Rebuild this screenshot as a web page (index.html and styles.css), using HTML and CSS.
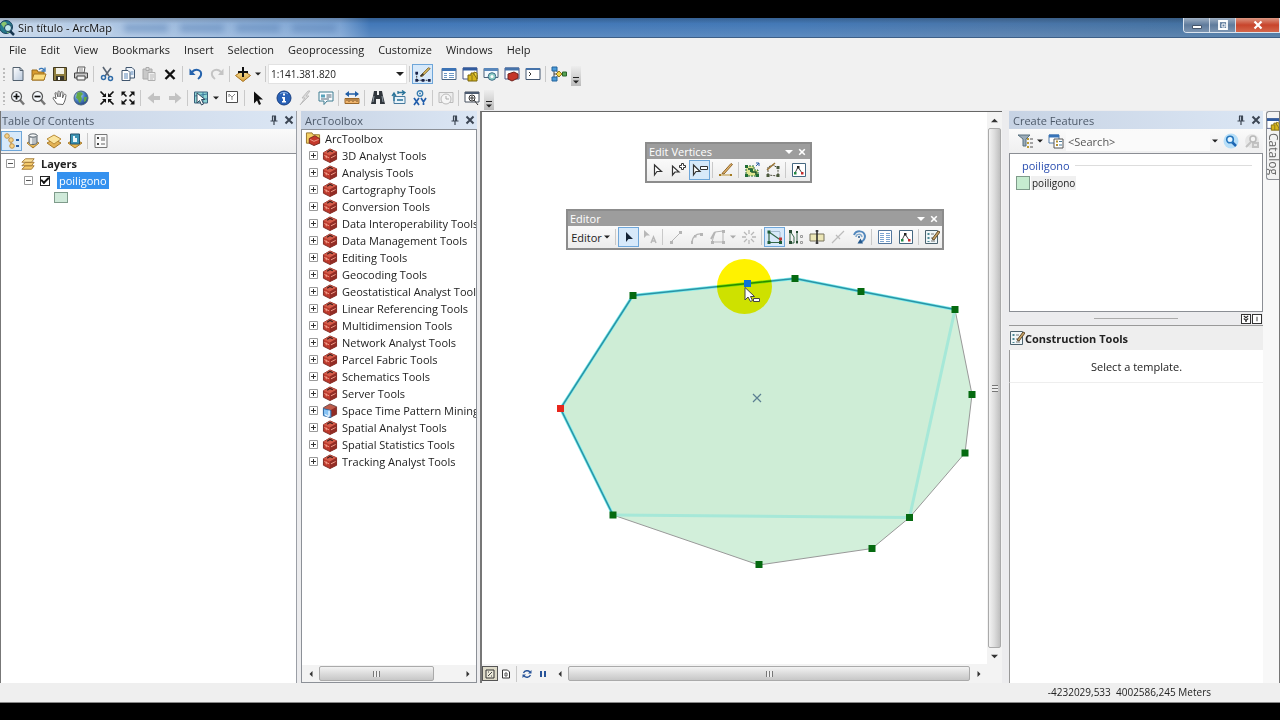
FILE: index.html
```html
<!DOCTYPE html>
<html lang="es">
<head>
<meta charset="utf-8">
<title>Sin título - ArcMap</title>
<link rel="stylesheet" href="styles.css">
</head>
<body>
<svg class="sprite" aria-hidden="true">
  <defs>
    <linearGradient id="steel" x1="0" y1="0" x2="1" y2="1"><stop offset="0" stop-color="#fff"/><stop offset="1" stop-color="#b8c8dc"/></linearGradient>
    <linearGradient id="gold" x1="0" y1="0" x2="0" y2="1"><stop offset="0" stop-color="#fbe6a0"/><stop offset="1" stop-color="#d9a23a"/></linearGradient>
    <radialGradient id="globe" cx=".35" cy=".3" r=".8"><stop offset="0" stop-color="#bfe0ff"/><stop offset=".5" stop-color="#4a7fc4"/><stop offset="1" stop-color="#1d3a78"/></radialGradient>
  </defs>
  <symbol id="pin" viewBox="0 0 10 10"><path d="M3 1h4M3.500 1v5M6.500 1v5M5.500 1v5M1.500 6h7M5 6v4" fill="none" stroke="#3c4654" stroke-width="1.200"/></symbol>
  <symbol id="close" viewBox="0 0 10 10"><path d="M1.500 1.500l7 7M8.500 1.500l-7 7" fill="none" stroke="currentColor" stroke-width="2"/></symbol>
  <symbol id="drop" viewBox="0 0 8 8"><path d="M0 2h8L4 6z" fill="currentColor"/></symbol>
  <symbol id="left" viewBox="0 0 8 8"><path d="M6 0v8L2 4z" fill="currentColor"/></symbol>
  <symbol id="right" viewBox="0 0 8 8"><path d="M2 0v8l4-4z" fill="currentColor"/></symbol>
  <symbol id="up" viewBox="0 0 8 8"><path d="M0 6h8L4 2z" fill="currentColor"/></symbol>
  <symbol id="new" viewBox="0 0 16 16"><path d="M3 1.500h7l3 3v10H3z" fill="url(#steel)" stroke="#52606e"/><path d="M10 1.500v3h3" fill="none" stroke="#52606e"/></symbol>
  <symbol id="open" viewBox="0 0 16 16"><path d="M1 14V4h5l1 2h6v8z" fill="#d99c2e" stroke="#94691c"/><path d="M1 14l2-6h12l-2 6z" fill="#fbdc7e" stroke="#a67722"/><path d="M8 3.500c2-2 4-1 5 .5M14 1.500v3.500h-3.500" fill="none" stroke="#3676b8" stroke-width="1.300"/></symbol>
  <symbol id="save" viewBox="0 0 16 16"><path d="M1.500 1.500h13v13h-13z" fill="#8f7e3e" stroke="#403820"/><path d="M4 2h8v6H4z" fill="#f3f1e6"/><path d="M4 10h8v4H4z" fill="#3a3930"/><path d="M6 11h2v3H6z" fill="#fff"/></symbol>
  <symbol id="print" viewBox="0 0 16 16"><path d="M4 7l1-6h7l-1 6z" fill="#fff" stroke="#555"/><path d="M1.500 7h13v5h-13z" fill="#c8c8c8" stroke="#444"/><path d="M4 10h8v4H4z" fill="#f4f4f4" stroke="#444"/><path d="M6 3h4M6 5h4" stroke="#8a8a8a"/></symbol>
  <symbol id="cut" viewBox="0 0 16 16"><path d="M4 1l6 9M12 2L6 10" fill="none" stroke="#5a6573" stroke-width="1.600"/><circle cx="4.500" cy="11.500" r="2" fill="none" stroke="#2e6ba8" stroke-width="1.500"/><circle cx="11.500" cy="12.500" r="2" fill="none" stroke="#2e6ba8" stroke-width="1.500"/></symbol>
  <symbol id="copy" viewBox="0 0 16 16"><path d="M6 1.500h6l2.500 2.500v8H6z" fill="#eef4fb" stroke="#40566e"/><path d="M2 4.500h6l2 2v8H2z" fill="#fff" stroke="#40566e"/><path d="M4 8h4M4 10h4M4 12h4M10.500 6h3M10.500 8h3" stroke="#5a87b8"/></symbol>
  <symbol id="paste" viewBox="0 0 16 16"><path d="M2 3h9v10H2z" fill="#c9c9c9" stroke="#aaa"/><path d="M5 1.500h3v3H5z" fill="#ddd" stroke="#aaa"/><path d="M7 6.500h7v8H7z" fill="#efefef" stroke="#b0b0b0"/><path d="M9 9h4M9 11h4M9 13h3" stroke="#bbb"/></symbol>
  <symbol id="delete" viewBox="0 0 16 16"><path d="M3.500 4l9 9M12.500 4l-9 9" stroke="#111" stroke-width="2.400"/></symbol>
  <symbol id="undo" viewBox="0 0 16 16"><path d="M4 6c4-4 10-2 9 3-.4 2-2 3-3 4" fill="none" stroke="#2462ac" stroke-width="2"/><path d="M1.500 2.500v6.500h6z" fill="#2462ac"/></symbol>
  <symbol id="redo" viewBox="0 0 16 16"><path d="M12 6C8 2 2 4 3 9c.4 2 2 3 3 4" fill="none" stroke="#c4c4c4" stroke-width="2"/><path d="M14.500 2.500v6.500H9z" fill="#c4c4c4"/></symbol>
  <symbol id="adddata" viewBox="0 0 16 16"><path d="M8 4.500l7.500 5L8 15.500l-7.500-6z" fill="url(#gold)" stroke="#a8711d"/><path d="M8 1v10M3 6h10" stroke="#111" stroke-width="2"/></symbol>
  <symbol id="editbar" viewBox="0 0 20 20"><path d="M3 9v8h14" fill="none" stroke="#222" stroke-dasharray="2 1"/><path d="M1.500 7.500h3v3h-3zM1.500 15.500h3v3h-3zM8.500 15.500h3v3h-3zM15.500 15.500h3v3h-3z" fill="#17214a"/><path d="M7 12l9-9 2 1-9 9z" fill="#d8b95c" stroke="#7a6432"/><path d="M7 12l3-3 1 2-4 2z" fill="#333"/></symbol>
  <symbol id="toc" viewBox="0 0 16 16"><path d="M1 2.500h14v11H1z" fill="#fff" stroke="#4a6583"/><path d="M1 2h14v3H1z" fill="#3c73b5"/><path d="M3 7.500h3M3 9.500h3M3 11.500h3M8 7.500h5M8 9.500h5M8 11.500h5" stroke="#6e99c5"/></symbol>
  <symbol id="catalog" viewBox="0 0 16 16"><path d="M1 2h14v11H1z" fill="#fff" stroke="#4a5583"/><path d="M1 1.500h14v3H1z" fill="#315b9e"/><path d="M6 9h3V7h3v2h3v6H6z" fill="#d6b51c" stroke="#79650e"/><path d="M10 15V9M12 8V6l3 1v6z" fill="#f0d847" stroke="#8a7415"/></symbol>
  <symbol id="searchwin" viewBox="0 0 16 16"><path d="M1 2.500h14v9H1z" fill="#f4faff" stroke="#4c627a"/><path d="M1 2h14v3H1z" fill="#5987bb"/><circle cx="9" cy="10.500" r="3.800" fill="#8ecdc5" stroke="#406e88"/><circle cx="9" cy="10.500" r="1.500" fill="#fff"/></symbol>
  <symbol id="toolwin" viewBox="0 0 16 16"><path d="M1 2h14v11H1z" fill="#fff" stroke="#4a5583"/><path d="M1 1.500h14v3H1z" fill="#4673aa"/><path d="M4 8l6-2 4 2v4l-6 3-4-2z" fill="#c5362b" stroke="#71231e"/></symbol>
  <symbol id="python" viewBox="0 0 16 16"><path d="M1 2.500h14v11H1z" fill="#fff" stroke="#41546e"/><path d="M1 2h14v2H1z" fill="#4673aa"/><path d="M4 6l2 2-2 2" fill="none" stroke="#333"/></symbol>
  <symbol id="model" viewBox="0 0 16 16"><path d="M3 3v10M3 8h10M4 3l4 5-4 5" stroke="#444" fill="none"/><path d="M1 1h5v4H1zM1 11h5v4H1z" fill="#4b9bd8" stroke="#22629b"/><path d="M5 8l3-3 3 3-3 3z" fill="#f1d14c" stroke="#8d7820"/><path d="M11.500 6h4v4h-4z" fill="#57a355" stroke="#2b642b"/></symbol>
  <symbol id="zoomin" viewBox="0 0 16 16"><path d="M10 10l4 4.500" stroke="#777" stroke-width="2.500"/><circle cx="6.500" cy="6.500" r="5" fill="#f4f8fc" stroke="#555" stroke-width="1.200"/><path d="M6.500 3.500v6M3.500 6.500h6" stroke="#111" stroke-width="1.700"/></symbol>
  <symbol id="zoomout" viewBox="0 0 16 16"><path d="M10 10l4 4.500" stroke="#777" stroke-width="2.500"/><circle cx="6.500" cy="6.500" r="5" fill="#f4f8fc" stroke="#555" stroke-width="1.200"/><path d="M3.500 6.500h6" stroke="#111" stroke-width="1.700"/></symbol>
  <symbol id="pan" viewBox="0 0 16 16"><path d="M5 14C3 11 1 9 1 8s2-1 3 1L3 3c1-1 2 0 2 1l1 3V1.500c1-1 2 0 2 1V7l1-5c1-1 2 0 2 1l-.5 5L12 4.500c1-1 2 0 2 1-.5 3-1 6-3 9z" fill="#fff" stroke="#666"/></symbol>
  <symbol id="full" viewBox="0 0 16 16"><circle cx="8" cy="8" r="7" fill="url(#globe)" stroke="#4a6583"/><path d="M4 3c3-2 5-1 6 1L8 6l1 3-2 4c-2-1-1-4-4-5zM11 7l3 0-1 4-2 1z" fill="#63a846"/></symbol>
  <symbol id="fixin" viewBox="0 0 16 16"><path d="M1.500 1.500l4 4M14.500 1.500l-4 4M1.500 14.500l4-4M14.500 14.500l-4-4" stroke="#111" stroke-width="1.700"/><path d="M7 3v4H3zM9 3v4h4zM7 13V9H3zM9 13V9h4z" fill="#111"/></symbol>
  <symbol id="fixout" viewBox="0 0 16 16"><path d="M3 3l3.500 3.500M13 3L9.500 6.500M3 13l3.500-3.500M13 13L9.500 9.500" stroke="#111" stroke-width="1.600"/><path d="M1.500 6V1.500H6zM14.500 6V1.500H10zM1.500 10v4.500H6zM14.500 10v4.500H10z" fill="#111"/></symbol>
  <symbol id="back" viewBox="0 0 16 16"><path d="M1.500 8L8 2.500V6h6v4H8v3.500z" fill="#c2c2c2"/></symbol>
  <symbol id="forward" viewBox="0 0 16 16"><path d="M14.500 8L8 2.500V6H2v4h6v3.500z" fill="#c2c2c2"/></symbol>
  <symbol id="select" viewBox="0 0 16 16"><path d="M1.500 2h13v11h-13z" fill="#8ed5d3" stroke="#3a617c"/><path d="M10 2v11M2 6l12-2M10 9h4" stroke="#3a779c"/><path d="M4 3v10l2.500-2.500L8.500 15l2-1-2-4.500H12z" fill="#fff" stroke="#344b60"/></symbol>
  <symbol id="clear" viewBox="0 0 16 16"><path d="M2.500 1.500h11v11h-11z" fill="#fff" stroke="#4c4c4c"/><path d="M5 4l3 3 3-3M8 7v3M5 4v3" fill="none" stroke="#888"/></symbol>
  <symbol id="pointer" viewBox="0 0 16 16"><path d="M4 1.500v12l3-3 2 4.500 2-1-2-4.500h4z" fill="#111"/></symbol>
  <symbol id="info" viewBox="0 0 16 16"><circle cx="8" cy="8" r="7" fill="#2961b6" stroke="#173f82"/><path d="M4 4c2-2 6-2 8 0" stroke="#92b9ed" fill="none"/><path d="M7 3.500h2v2H7zM6 7h3v4h1v1.500H6V11h1V8.500H6z" fill="#fff"/></symbol>
  <symbol id="bolt" viewBox="0 0 16 16"><path d="M11 1L5 8h3l-5 7 9-9H9l4-5z" fill="#ddd" stroke="#bdbdbd"/></symbol>
  <symbol id="popup" viewBox="0 0 16 16"><path d="M1 2h14v9H9l-3 3.500V11H1z" fill="#f8fcff" stroke="#3f7c91"/><path d="M3 4.500h4v3H3z" fill="#59a3bb"/><path d="M8.500 5h5M8.500 7h5M3 9h8" stroke="#567"/></symbol>
  <symbol id="measure" viewBox="0 0 16 16"><path d="M1 8.500h14v5H1z" fill="#f0b56d" stroke="#99672b"/><path d="M3 9v2M5 9v3M7 9v2M9 9v3M11 9v2M13 9v3" stroke="#795124"/><path d="M2 4h12" stroke="#225fa7" stroke-width="1.500"/><path d="M1 4l4-3v6zM15 4l-4-3v6z" fill="#225fa7"/></symbol>
  <symbol id="find" viewBox="0 0 16 16"><path d="M4 1h3v4h2V1h3l1 5 2 8h-5V9H6v5H1l2-8z" fill="#30363c"/><path d="M4 6l-1 6M12 6l1 6" stroke="#8f9aa3"/></symbol>
  <symbol id="route" viewBox="0 0 16 16"><path d="M3 6.500h11v7H3z" fill="#e8f3fa" stroke="#477a9d"/><path d="M3 11V4M1 6l2-3 2 3M7 2.500h6M11 .5l3 2-3 2.500M7 1v3M6 10h6" fill="none" stroke="#287399" stroke-width="1.300"/></symbol>
  <symbol id="xy" viewBox="0 0 16 16"><circle cx="8" cy="3.500" r="2.700" fill="#fff" stroke="#397db0" stroke-width="1.400"/><circle cx="8" cy="3.500" r="1" fill="#397db0"/><path d="M2 8l5 7M7 8l-5 7M9 8l2.500 4L14 8M11.500 11v4" fill="none" stroke="#235fac" stroke-width="1.700"/></symbol>
  <symbol id="time" viewBox="0 0 16 16"><path d="M1 2.500h14v10H1z" fill="#eee" stroke="#bbb"/><circle cx="8" cy="9" r="5" fill="#f6f6f6" stroke="#bbb"/><path d="M8 6v3h3" fill="none" stroke="#aaa"/></symbol>
  <symbol id="viewer" viewBox="0 0 16 16"><path d="M1 2h14v10H1z" fill="#fff" stroke="#454f5d"/><path d="M1 2h14v2H1z" fill="#4c5b70"/><circle cx="8" cy="8" r="3" fill="#fff" stroke="#333"/><path d="M6 8h4M8 6v4M10 10l4 5" stroke="#333"/></symbol>
  <symbol id="bydraw" viewBox="0 0 16 16"><path d="M3 3l4 4v6h3" fill="none" stroke="#a97b36"/><circle cx="3" cy="3" r="2.300" fill="#f5d288" stroke="#c2954e"/><circle cx="7" cy="7" r="2.300" fill="#f5d288" stroke="#c2954e"/><circle cx="8" cy="13" r="2.300" fill="#f5d288" stroke="#c2954e"/><path d="M12 7h3M12 13h3" stroke="#285fa5" stroke-width="2"/></symbol>
  <symbol id="bysource" viewBox="0 0 16 16"><path d="M2 10l6-3 6 3-6 5z" fill="url(#gold)" stroke="#a87b2c"/><path d="M4 2v8c1 2 7 2 8 0V2z" fill="#b8bec4" stroke="#5d666e"/><ellipse cx="8" cy="2.500" rx="4" ry="1.700" fill="#f4f6f8" stroke="#5d666e"/><path d="M6 5v6" stroke="#fff" stroke-width="1.500"/></symbol>
  <symbol id="byvis" viewBox="0 0 16 16"><path d="M1 10l7-4 7 4-7 5z" fill="#e3b255" stroke="#a87b2c"/><path d="M1 6l7-4 7 4-7 5z" fill="#fae49e" stroke="#b98c38"/></symbol>
  <symbol id="bysel" viewBox="0 0 16 16"><path d="M1 10l7-4 7 4-7 5z" fill="#e9b64b" stroke="#a87b2c"/><path d="M3.500 1h9v10h-9z" fill="#3c94b4" stroke="#24536c"/><path d="M6 3h2v2h2v4H6z" fill="#e9f6fa"/></symbol>
  <symbol id="options" viewBox="0 0 16 16"><path d="M2 1.500h12v13H2z" fill="#fafafa" stroke="#777"/><path d="M4 4h2v2H4zM4 10h2v2H4z" fill="#444"/><path d="M8 5h4M8 7h4M8 11h4" stroke="#666"/></symbol>
  <symbol id="layers" viewBox="0 0 16 16"><path d="M1 14l4-4h10l-3 4H1z" fill="#f4ca6c" stroke="#9e712a"/><path d="M1 10l4-4h10l-3 4H1z" fill="#f4ca6c" stroke="#9e712a"/><path d="M1 6l4-4h10l-3 4H1z" fill="#fbe19a" stroke="#9e712a"/></symbol>
  <symbol id="box" viewBox="0 0 16 16"><path d="M1 5l7-4 7 3v8l-7 3.500L1 12z" fill="#bd392b" stroke="#7c2a22"/><path d="M1 5l7-4 7 3-7 4z" fill="#d45b49"/><path d="M8 8l7-4v8l-7 3.500z" fill="#912c25"/><path d="M5 4.500l3-2 3 1.500" fill="none" stroke="#38201d" stroke-width="1.300"/><path d="M2 8l5 2.500M9 10.500l5-2.500M4 8v3" stroke="#f5a28f"/></symbol>
  <symbol id="boxfolder" viewBox="0 0 16 16"><path d="M1 2h6l1 2h7v9H1z" fill="#f4cf64" stroke="#94712a"/><path d="M4 8l6-3 5 3v5l-6 2.500L4 13z" fill="#c5392c" stroke="#762920"/><path d="M5 9l4 2 5-2" fill="none" stroke="#f0a08d"/></symbol>
  <symbol id="boxpy" viewBox="0 0 16 16"><path d="M1 5l7-4 7 3v8l-7 3.500L1 12z" fill="#bd5b4b" stroke="#6c4a4a"/><path d="M8 8l7-4v8l-7 3.500z" fill="#912c25"/><path d="M1 6l8 2v7.500l-8-2z" fill="#86c2f3" stroke="#2c6aa8"/><path d="M7 8v5c0 2-3 1-4-1" fill="none" stroke="#e7f4ff" stroke-width="1.500"/></symbol>
  <symbol id="plus" viewBox="0 0 9 9"><path d="M.5.5h8v8h-8z" fill="#fff" stroke="#9a9a9a"/><path d="M2 4.500h5M4.500 2v5" stroke="#333"/></symbol>
  <symbol id="minus" viewBox="0 0 9 9"><path d="M.5.5h8v8h-8z" fill="#fff" stroke="#9a9a9a"/><path d="M2 4.500h5" stroke="#555"/></symbol>
  <symbol id="vsel" viewBox="0 0 16 16"><path d="M4.500 3v10L7 9.500h4.500z" fill="#fff" stroke="#333" stroke-width="1.200"/></symbol>
  <symbol id="vadd" viewBox="0 0 16 16"><path d="M1.500 4v9L4 10h4z" fill="#fff" stroke="#333" stroke-width="1.200"/><path d="M10.500 1.500h2v2h2v2h-2v2h-2v-2h-2v-2h2z" fill="#fff" stroke="#333"/></symbol>
  <symbol id="vdel" viewBox="0 0 16 16"><path d="M1.500 3v10L4 9.500h4z" fill="#fff" stroke="#333" stroke-width="1.200"/><path d="M8.500 4.500h7v3h-7z" fill="#fff" stroke="#333"/></symbol>
  <symbol id="sketch" viewBox="0 0 16 16"><path d="M2 13h11" stroke="#bd963b"/><path d="M4 11.500L13 1.500l1.500 1L6 12z" fill="#e7b66c" stroke="#8d662c"/><path d="M1 12h2v2H1zM12 12h2v2h-2z" fill="#a47b21"/></symbol>
  <symbol id="reshape" viewBox="0 0 16 16"><path d="M2 4h8v4h4v6H2z" fill="#dfe68f" stroke="#216d37" stroke-dasharray="2 1"/><path d="M4 7h4v3h4v3" fill="none" stroke="#164f27" stroke-width="1.500"/><path d="M1 3h3v3H1zM1 12h3v3H1zM6 7h3v3H6zM12 12h3v3h-3z" fill="#216d37"/><path d="M12 4l3-3M12 1h3v3" stroke="#285fa5" fill="none"/></symbol>
  <symbol id="cont" viewBox="0 0 16 16"><path d="M3 13V5l5-2 5 3v8z" fill="none" stroke="#4c4c3c" stroke-dasharray="2 1"/><path d="M2 8l8-7" stroke="#9b7434" stroke-width="1.500"/><path d="M1.500 12h3v3h-3zM11.500 12h3v3h-3zM11.500 4h3v3h-3z" fill="#4a593b"/></symbol>
  <symbol id="sketchprop" viewBox="0 0 16 16"><path d="M1.500 1.500h13v13h-13z" fill="#fff" stroke="#446780"/><path d="M4 11l3-6 4 6" fill="none" stroke="#444"/><path d="M3 10h2.500v2.500H3z" fill="#208a43"/><path d="M6 4h2.500v2.500H6z" fill="#222"/><path d="M10 10h2.500v2.500H10z" fill="#c52b2b"/></symbol>
  <symbol id="arrow" viewBox="0 0 16 16"><path d="M5 3v10l2.500-3H12z" fill="#142335"/></symbol>
  <symbol id="annot" viewBox="0 0 16 16"><path d="M2 1v8l2.500-2.500H8z" fill="#b8b8b8"/><path d="M9 14l2.500-6 2.500 6M10 12h3" fill="none" stroke="#b8b8b8" stroke-width="1.500"/></symbol>
  <symbol id="seg" viewBox="0 0 16 16"><path d="M3 13L13 3" stroke="#b5b5b5"/><path d="M2 12h3v3H2zM11 2h3v3h-3z" fill="#b5b5b5"/></symbol>
  <symbol id="arc" viewBox="0 0 16 16"><path d="M3 14C3 8 7 4 13 5" fill="none" stroke="#b5b5b5" stroke-width="1.300"/><path d="M2 12h2v3H2zM5 6h2.500v2.500H5zM11 4h3v3h-3z" fill="#b5b5b5"/></symbol>
  <symbol id="trace" viewBox="0 0 16 16"><path d="M2 13L5 3l8-1v11z" fill="none" stroke="#b5b5b5"/><path d="M1 12h3v3H1zM12 1h3v3h-3zM12 12h3v3h-3z" fill="#b5b5b5"/><path d="M1 10l4-7" stroke="#b5b5b5" stroke-width="2"/></symbol>
  <symbol id="point" viewBox="0 0 16 16"><path d="M8 1v4M8 11v4M1 8h4M11 8h4M3 3l3 3M10 10l3 3M13 3l-3 3M3 13l3-3" stroke="#b8b8b8" stroke-width="1.300"/></symbol>
  <symbol id="editv" viewBox="0 0 16 16"><path d="M2 3v10.500h12M2 3l11.500 8V13" fill="none" stroke="#356749" stroke-width="1.200"/><path d="M4 2.500h9M13 3v6" stroke="#a4bbd0"/><path d="M.5 1.500h3v3h-3zM.5 12h3v3h-3zM12 12h3v3h-3z" fill="#1d5c36"/><path d="M12 8.500h3v3h-3z" fill="#bf3434"/></symbol>
  <symbol id="reshapef" viewBox="0 0 16 16"><path d="M2 2v12h4V8L2 2M9 2v13" fill="none" stroke="#356749"/><path d="M1 1h3v3H1zM1 12h3v3H1zM8 2h2v2H8zM8 12h2v2H8z" fill="#264c32"/><path d="M12.500 6.500h2v2h-2zM12.500 12.500h2v2h-2z" fill="none" stroke="#9a9a9a"/></symbol>
  <symbol id="cutpoly" viewBox="0 0 16 16"><path d="M1 5h14v7H1z" fill="#ece6b6" stroke="#77735c"/><path d="M8 1v14" stroke="#222" stroke-width="1.500"/><path d="M6.500 2h3M6.500 14h3" stroke="#222"/></symbol>
  <symbol id="split" viewBox="0 0 16 16"><path d="M2 14L14 2M6 6l4 4" stroke="#bcbcbc" stroke-width="1.200"/></symbol>
  <symbol id="rotate" viewBox="0 0 16 16"><path d="M3 6c2-5 10-5 11 1 0 4-2 5-4 6" fill="none" stroke="#5388bd" stroke-width="2"/><path d="M11 8c-1-4-6-3-6 0" fill="none" stroke="#82aacd" stroke-width="1.500"/><path d="M6.500 14.500h5.500l-2.500-5z" fill="#24588c"/><circle cx="8" cy="8" r="1" fill="#24588c"/></symbol>
  <symbol id="attrs" viewBox="0 0 16 16"><path d="M1.500 1.500h13v13h-13z" fill="#fff" stroke="#53779e"/><path d="M3 4.500h4M3 6.500h4M3 8.500h4M3 10.500h4M3 12.500h4M9 4.500h4M9 6.500h4M9 8.500h4M9 10.500h4M9 12.500h4" stroke="#7ca4d0"/></symbol>
  <symbol id="create" viewBox="0 0 16 16"><path d="M1.500 1.500h12v13h-12z" fill="#eff6f8" stroke="#4b626e"/><path d="M3.500 4h2v2h-2zM3.500 8h2v2h-2zM3.500 12h2v1h-2z" fill="#4c8894"/><path d="M7 5h3M7 9h3M7 12h4" stroke="#777"/><path d="M8 10l6-8 2 1-6 8z" fill="#c9a466" stroke="#614b2c"/></symbol>
  <symbol id="filter" viewBox="0 0 16 16"><path d="M1 2h12L9 6v7H6V6z" fill="#9aabb8" stroke="#59717f"/><path d="M10 6h2M10 10h2M10 14h2" stroke="#bc9b35" stroke-width="2"/><path d="M13 6h3M13 10h3M13 14h3" stroke="#555"/></symbol>
  <symbol id="organize" viewBox="0 0 16 16"><path d="M1 2h10v8H1z" fill="#fff" stroke="#527ba6"/><path d="M1 1.500h10v3H1z" fill="#3773b8"/><path d="M6 6h9v9H6z" fill="#fff" stroke="#555"/><path d="M8 8.500h2M8 12h2" stroke="#b49031" stroke-width="2"/><path d="M11 8.500h3M11 12h3" stroke="#477898"/></symbol>
  <symbol id="lens" viewBox="0 0 16 16"><circle cx="8" cy="8" r="7.500" fill="#b8dff8"/><path d="M9 9l4 4" stroke="#1c65b3" stroke-width="2.500"/><circle cx="7" cy="6.500" r="3.300" fill="#e9f7ff" stroke="#2475bd" stroke-width="1.600"/></symbol>
  <symbol id="lensoff" viewBox="0 0 16 16"><circle cx="8" cy="8" r="7" fill="#e6e6e6"/><path d="M2 14l5-5M9 10h5v4H9z" stroke="#c2c2c2" stroke-width="2" fill="none"/><circle cx="9" cy="6" r="3" fill="#f4f4f4" stroke="#bababa" stroke-width="1.500"/></symbol>
  <symbol id="dataview" viewBox="0 0 10 10"><path d="M1 1h8v8H1z" fill="#eceada" stroke="#333"/><path d="M3 7l4-4M3 3h1M6 7h1" stroke="#444"/></symbol>
  <symbol id="layoutview" viewBox="0 0 10 10"><path d="M1.500 1h5l2 2v6h-7z" fill="#fff" stroke="#333"/><path d="M4 4h2v3H4z" fill="none" stroke="#555"/></symbol>
  <symbol id="refresh" viewBox="0 0 10 10"><path d="M1.500 4a4 4 0 0 1 6.500-1M8.500 6a4 4 0 0 1-6.500 1" fill="none" stroke="#285499" stroke-width="1.400"/><path d="M9.500 1v3.500H6zM.5 9V5.500H4z" fill="#285499"/></symbol>
  <symbol id="pause" viewBox="0 0 10 10"><path d="M2 2h2v6H2zM6 2h2v6H6z" fill="#285499"/></symbol>
  <symbol id="logo" viewBox="0 0 16 16"><circle cx="6" cy="7" r="6.500" fill="#267a8c" stroke="#173f5b"/><path d="M1 4c3-4 6-2 6 1L4 8zM7 9l4-2-1 5-3 1z" fill="#8ac66e"/><circle cx="8" cy="8" r="3.500" fill="#bfe7ed" stroke="#173f5b"/><path d="M10 11l4 4" stroke="#163650" stroke-width="2.500"/></symbol>
</svg>

<div class="app">
  <header class="titlebar">
    <svg class="i16"><use href="#logo"/></svg>
    <h1>Sin título - ArcMap</h1>
    <div class="ghosts" aria-hidden="true"><i></i><i></i><i></i><i></i></div>
    <div class="winctl">
      <button type="button" aria-label="Minimize"><svg viewBox="0 0 12 12"><path d="M1.500 6.500h9v3h-9z" fill="#fff" stroke="#45556a"/></svg></button>
      <button type="button" aria-label="Restore"><svg viewBox="0 0 12 12"><path d="M2 2h8v8H2z" fill="none" stroke="#fff" stroke-width="1.800"/><path d="M5 5h3v3H5z" fill="none" stroke="#fff"/></svg></button>
      <button type="button" class="shut" aria-label="Close"><svg viewBox="0 0 12 12"><path d="M2.500 2.500l7 7M9.500 2.500l-7 7" stroke="#fff" stroke-width="2.200"/></svg></button>
    </div>
  </header>

  <nav class="menubar">
    <button type="button">File</button><button type="button">Edit</button><button type="button">View</button><button type="button">Bookmarks</button><button type="button">Insert</button><button type="button">Selection</button><button type="button">Geoprocessing</button><button type="button">Customize</button><button type="button">Windows</button><button type="button">Help</button>
  </nav>

  <div class="toolbar" role="toolbar" aria-label="Standard">
    <span class="grip"></span>
    <button class="tb" aria-label="New"><svg><use href="#new"/></svg></button>
    <button class="tb" aria-label="Open"><svg><use href="#open"/></svg></button>
    <button class="tb" aria-label="Save"><svg><use href="#save"/></svg></button>
    <button class="tb" aria-label="Print"><svg><use href="#print"/></svg></button>
    <span class="sep"></span>
    <button class="tb" aria-label="Cut"><svg><use href="#cut"/></svg></button>
    <button class="tb" aria-label="Copy"><svg><use href="#copy"/></svg></button>
    <button class="tb" aria-label="Paste"><svg><use href="#paste"/></svg></button>
    <button class="tb" aria-label="Delete"><svg><use href="#delete"/></svg></button>
    <span class="sep"></span>
    <button class="tb" aria-label="Undo"><svg><use href="#undo"/></svg></button>
    <button class="tb" aria-label="Redo"><svg><use href="#redo"/></svg></button>
    <span class="sep"></span>
    <button class="tb" aria-label="Add data"><svg><use href="#adddata"/></svg></button>
    <button class="dd" aria-label="Add data options"><svg><use href="#drop"/></svg></button>
    <span class="sep"></span>
    <label class="scale"><select aria-label="Map scale"><option>1:141.381.820</option></select><svg><use href="#drop"/></svg></label>
    <span class="sep"></span>
    <button class="tb on" aria-label="Editor toolbar"><svg><use href="#editbar"/></svg></button>
    <span class="gap"></span>
    <button class="tb" aria-label="Table of contents"><svg><use href="#toc"/></svg></button>
    <button class="tb" aria-label="Catalog"><svg><use href="#catalog"/></svg></button>
    <button class="tb" aria-label="Search window"><svg><use href="#searchwin"/></svg></button>
    <button class="tb" aria-label="ArcToolbox"><svg><use href="#toolwin"/></svg></button>
    <button class="tb" aria-label="Python"><svg><use href="#python"/></svg></button>
    <span class="sep"></span>
    <button class="tb" aria-label="ModelBuilder"><svg><use href="#model"/></svg></button>
    <button class="more" aria-label="Toolbar options"><i></i><svg><use href="#drop"/></svg></button>
  </div>

  <div class="toolbar" role="toolbar" aria-label="Tools">
    <span class="grip"></span>
    <button class="tb" aria-label="Zoom in"><svg><use href="#zoomin"/></svg></button>
    <button class="tb" aria-label="Zoom out"><svg><use href="#zoomout"/></svg></button>
    <button class="tb" aria-label="Pan"><svg><use href="#pan"/></svg></button>
    <button class="tb" aria-label="Full extent"><svg><use href="#full"/></svg></button>
    <span class="gap"></span>
    <button class="tb" aria-label="Fixed zoom in"><svg><use href="#fixin"/></svg></button>
    <button class="tb" aria-label="Fixed zoom out"><svg><use href="#fixout"/></svg></button>
    <span class="sep"></span>
    <button class="tb" aria-label="Back"><svg><use href="#back"/></svg></button>
    <button class="tb" aria-label="Forward"><svg><use href="#forward"/></svg></button>
    <span class="sep"></span>
    <button class="tb" aria-label="Select features"><svg><use href="#select"/></svg></button>
    <button class="dd" aria-label="Selection options"><svg><use href="#drop"/></svg></button>
    <button class="tb" aria-label="Clear selection"><svg><use href="#clear"/></svg></button>
    <span class="sep"></span>
    <button class="tb" aria-label="Select elements"><svg><use href="#pointer"/></svg></button>
    <span class="gap"></span>
    <button class="tb" aria-label="Identify"><svg><use href="#info"/></svg></button>
    <button class="tb" aria-label="Hyperlink"><svg><use href="#bolt"/></svg></button>
    <button class="tb" aria-label="HTML popup"><svg><use href="#popup"/></svg></button>
    <span class="sep"></span>
    <button class="tb" aria-label="Measure"><svg><use href="#measure"/></svg></button>
    <span class="sep"></span>
    <button class="tb" aria-label="Find"><svg><use href="#find"/></svg></button>
    <button class="tb" aria-label="Find route"><svg><use href="#route"/></svg></button>
    <button class="tb" aria-label="Go to XY"><svg><use href="#xy"/></svg></button>
    <span class="sep"></span>
    <button class="tb" aria-label="Time slider"><svg><use href="#time"/></svg></button>
    <span class="sep"></span>
    <button class="tb" aria-label="Viewer window"><svg><use href="#viewer"/></svg></button>
    <button class="more" aria-label="Toolbar options"><i></i><svg><use href="#drop"/></svg></button>
  </div>

  <main class="work">
    <section class="panel toc">
      <div class="head"><h2>Table Of Contents</h2><button aria-label="Pin"><svg><use href="#pin"/></svg></button><button aria-label="Close"><svg><use href="#close"/></svg></button></div>
      <div class="strip">
        <button class="tb on" aria-label="List by drawing order"><svg><use href="#bydraw"/></svg></button>
        <button class="tb" aria-label="List by source"><svg><use href="#bysource"/></svg></button>
        <button class="tb" aria-label="List by visibility"><svg><use href="#byvis"/></svg></button>
        <button class="tb" aria-label="List by selection"><svg><use href="#bysel"/></svg></button>
        <span class="sep"></span>
        <button class="tb" aria-label="Options"><svg><use href="#options"/></svg></button>
      </div>
      <ul class="tree layers">
        <li><svg class="i9"><use href="#minus"/></svg><svg class="i14"><use href="#layers"/></svg><b>Layers</b></li>
        <li class="lvl1"><svg class="i9"><use href="#minus"/></svg><input type="checkbox" id="lyr" checked><label for="lyr">poiligono</label></li>
        <li class="lvl2"><span class="swatch"></span></li>
      </ul>
    </section>

    <section class="panel arc">
      <div class="head"><h2>ArcToolbox</h2><button aria-label="Pin"><svg><use href="#pin"/></svg></button><button aria-label="Close"><svg><use href="#close"/></svg></button></div>
      <div class="arcbody">
        <ul class="tree tools">
          <li class="root"><svg class="i16"><use href="#boxfolder"/></svg>ArcToolbox</li>
          <li><svg class="i9"><use href="#plus"/></svg><svg class="i16"><use href="#box"/></svg>3D Analyst Tools</li>
          <li><svg class="i9"><use href="#plus"/></svg><svg class="i16"><use href="#box"/></svg>Analysis Tools</li>
          <li><svg class="i9"><use href="#plus"/></svg><svg class="i16"><use href="#box"/></svg>Cartography Tools</li>
          <li><svg class="i9"><use href="#plus"/></svg><svg class="i16"><use href="#box"/></svg>Conversion Tools</li>
          <li><svg class="i9"><use href="#plus"/></svg><svg class="i16"><use href="#box"/></svg>Data Interoperability Tools</li>
          <li><svg class="i9"><use href="#plus"/></svg><svg class="i16"><use href="#box"/></svg>Data Management Tools</li>
          <li><svg class="i9"><use href="#plus"/></svg><svg class="i16"><use href="#box"/></svg>Editing Tools</li>
          <li><svg class="i9"><use href="#plus"/></svg><svg class="i16"><use href="#box"/></svg>Geocoding Tools</li>
          <li><svg class="i9"><use href="#plus"/></svg><svg class="i16"><use href="#box"/></svg>Geostatistical Analyst Tools</li>
          <li><svg class="i9"><use href="#plus"/></svg><svg class="i16"><use href="#box"/></svg>Linear Referencing Tools</li>
          <li><svg class="i9"><use href="#plus"/></svg><svg class="i16"><use href="#box"/></svg>Multidimension Tools</li>
          <li><svg class="i9"><use href="#plus"/></svg><svg class="i16"><use href="#box"/></svg>Network Analyst Tools</li>
          <li><svg class="i9"><use href="#plus"/></svg><svg class="i16"><use href="#box"/></svg>Parcel Fabric Tools</li>
          <li><svg class="i9"><use href="#plus"/></svg><svg class="i16"><use href="#box"/></svg>Schematics Tools</li>
          <li><svg class="i9"><use href="#plus"/></svg><svg class="i16"><use href="#box"/></svg>Server Tools</li>
          <li><svg class="i9"><use href="#plus"/></svg><svg class="i16"><use href="#boxpy"/></svg>Space Time Pattern Mining Tools</li>
          <li><svg class="i9"><use href="#plus"/></svg><svg class="i16"><use href="#box"/></svg>Spatial Analyst Tools</li>
          <li><svg class="i9"><use href="#plus"/></svg><svg class="i16"><use href="#box"/></svg>Spatial Statistics Tools</li>
          <li><svg class="i9"><use href="#plus"/></svg><svg class="i16"><use href="#box"/></svg>Tracking Analyst Tools</li>
        </ul>
        <div class="hscroll">
          <button aria-label="Scroll left"><svg><use href="#left"/></svg></button>
          <div class="track"><div class="thumb short"><i></i></div></div>
          <button aria-label="Scroll right"><svg><use href="#right"/></svg></button>
        </div>
      </div>
    </section>

    <section class="map">
      <div class="canvas">
        <svg class="drawing" role="img" aria-label="Polygon being edited">
          <g transform="translate(-482 -112)">
            <path d="M560.500 408.500L633 295.500 747.500 283.500 795 278.500 861 291.500 955 309.500 972 394.500 965 453 909.500 517.500 872 548.500 759 565 613 515z" fill="#d2efda" stroke="#999" />
            <path d="M560.500 408.500L633 295.500 795 278.500 955 309.500 909.500 517.500 613 515z" fill="#ceedd6"/>
            <path d="M955 309.500L909.500 517.500 613 515" fill="none" stroke="#a6e8d8" stroke-width="3"/>
            <path d="M613 515L560.500 408.500 633 295.500 747.500 283.500 795 278.500 861 291.500 955 309.500" fill="none" stroke="#7cecec" stroke-width="3"/>
            <path d="M613 515L560.500 408.500 633 295.500 747.500 283.500 795 278.500 861 291.500 955 309.500" fill="none" stroke="#2b93a6" stroke-width="1.500"/>
            <circle class="halo" cx="744.500" cy="286.500" r="27.500"/>
            <g fill="#056a10">
              <path d="M629.500 292h7v7h-7zM791.500 275h7v7h-7zM857.500 288h7v7h-7zM951.500 306h7v7h-7zM968.500 391h7v7h-7zM961.500 449.500h7v7h-7zM906 514h7v7h-7zM868.500 545h7v7h-7zM755.500 561h7v7h-7zM609.500 511.500h7v7h-7z"/>
            </g>
            <path d="M557 405h7v7h-7z" fill="#e8261c"/>
            <path d="M744 280h7v7h-7z" fill="#0b72d8"/>
            <path d="M753 394l8 8M761 394l-8 8" stroke="#5b7f92" stroke-width="1.200"/>
            <path d="M745 287.500v12.500l3-3 2.500 4.500 2-1-2-4h4z" fill="#fff" stroke="#444"/>
            <path d="M753.500 298.500h6v3h-6z" fill="#fff" stroke="#444"/>
          </g>
        </svg>

        <div class="float verts" role="toolbar" aria-label="Edit Vertices">
          <div class="fhead"><span>Edit Vertices</span><button aria-label="Options"><svg><use href="#drop"/></svg></button><button aria-label="Close"><svg><use href="#close"/></svg></button></div>
          <div class="frow">
            <button class="tb" aria-label="Modify vertices"><svg><use href="#vsel"/></svg></button>
            <button class="tb" aria-label="Add vertex"><svg><use href="#vadd"/></svg></button>
            <button class="tb on" aria-label="Delete vertex"><svg><use href="#vdel"/></svg></button>
            <span class="sep"></span>
            <button class="tb" aria-label="Continue feature"><svg><use href="#sketch"/></svg></button>
            <span class="sep"></span>
            <button class="tb" aria-label="Finish sketch"><svg><use href="#reshape"/></svg></button>
            <button class="tb" aria-label="Finish part"><svg><use href="#cont"/></svg></button>
            <span class="sep"></span>
            <button class="tb" aria-label="Sketch properties"><svg><use href="#sketchprop"/></svg></button>
          </div>
        </div>

        <div class="float editor" role="toolbar" aria-label="Editor">
          <div class="fhead"><span>Editor</span><button aria-label="Options"><svg><use href="#drop"/></svg></button><button aria-label="Close"><svg><use href="#close"/></svg></button></div>
          <div class="frow">
            <button class="edmenu">Editor<svg><use href="#drop"/></svg></button>
            <span class="sep"></span>
            <button class="tb on" aria-label="Edit tool"><svg><use href="#arrow"/></svg></button>
            <button class="tb" aria-label="Edit annotation"><svg><use href="#annot"/></svg></button>
            <span class="sep"></span>
            <button class="tb" aria-label="Straight segment"><svg><use href="#seg"/></svg></button>
            <button class="tb" aria-label="Arc segment"><svg><use href="#arc"/></svg></button>
            <button class="tb" aria-label="Trace"><svg><use href="#trace"/></svg></button>
            <button class="dd off" aria-label="Trace options"><svg><use href="#drop"/></svg></button>
            <button class="tb" aria-label="Point"><svg><use href="#point"/></svg></button>
            <span class="sep"></span>
            <button class="tb on" aria-label="Edit vertices"><svg><use href="#editv"/></svg></button>
            <button class="tb" aria-label="Reshape"><svg><use href="#reshapef"/></svg></button>
            <button class="tb" aria-label="Cut polygons"><svg><use href="#cutpoly"/></svg></button>
            <button class="tb" aria-label="Split"><svg><use href="#split"/></svg></button>
            <button class="tb" aria-label="Rotate"><svg><use href="#rotate"/></svg></button>
            <span class="sep"></span>
            <button class="tb" aria-label="Attributes"><svg><use href="#attrs"/></svg></button>
            <button class="tb" aria-label="Sketch properties"><svg><use href="#sketchprop"/></svg></button>
            <span class="sep"></span>
            <button class="tb" aria-label="Create features"><svg><use href="#create"/></svg></button>
          </div>
        </div>
      </div>
      <div class="vscroll">
        <button aria-label="Scroll up"><svg><use href="#up"/></svg></button>
        <div class="vthumb"><i></i></div>
        <button aria-label="Scroll down"><svg><use href="#drop"/></svg></button>
      </div>
      <div class="mapfoot hscroll">
        <button class="view on" aria-label="Data view"><svg><use href="#dataview"/></svg></button>
        <button class="view" aria-label="Layout view"><svg><use href="#layoutview"/></svg></button>
        <span class="sep"></span>
        <button class="view" aria-label="Refresh"><svg><use href="#refresh"/></svg></button>
        <button class="view" aria-label="Pause drawing"><svg><use href="#pause"/></svg></button>
        <button aria-label="Scroll left"><svg><use href="#left"/></svg></button>
        <div class="track"><div class="thumb"><i></i></div></div>
        <button aria-label="Scroll right"><svg><use href="#right"/></svg></button>
        <span class="corner"></span>
      </div>
    </section>

    <section class="panel create">
      <div class="head"><h2>Create Features</h2><button aria-label="Pin"><svg><use href="#pin"/></svg></button><button aria-label="Close"><svg><use href="#close"/></svg></button></div>
      <div class="strip">
        <button class="tb" aria-label="Filter"><svg><use href="#filter"/></svg></button>
        <button class="dd" aria-label="Filter options"><svg><use href="#drop"/></svg></button>
        <button class="tb" aria-label="Organize templates"><svg><use href="#organize"/></svg></button>
        <input type="text" aria-label="Search templates" placeholder="&lt;Search&gt;">
        <button class="dd" aria-label="Search history"><svg><use href="#drop"/></svg></button>
        <button class="tb" aria-label="Search"><svg><use href="#lens"/></svg></button>
        <button class="tb" aria-label="Clear search"><svg><use href="#lensoff"/></svg></button>
      </div>
      <div class="templates">
        <h3>poiligono</h3>
        <button class="tpl"><span class="swatch"></span><span class="name">poiligono</span></button>
      </div>
      <div class="splitter"><hr><button aria-label="Collapse"><svg viewBox="0 0 9 9"><path d="M2 1l2.500 2L7 1M2 4l2.500 2L7 4M3.500 7h2" fill="none" stroke="#222" stroke-width="1.300"/></svg></button><button aria-label="Restore"><svg viewBox="0 0 9 9"><path d="M4.500 2v5" stroke="#222"/></svg></button></div>
      <div class="conhead"><svg class="i16"><use href="#create"/></svg><h3>Construction Tools</h3></div>
      <p>Select a template.</p>
      <div class="blank"></div>
    </section>

    <aside class="dock"><button class="cattab"><svg><use href="#catalog"/></svg><span>Catalog</span></button></aside>
  </main>

  <footer class="status"><span>-4232029,533&nbsp; 4002586,245 Meters</span></footer>
</div>
</body>
</html>
```
FILE: styles.css
```css
* { box-sizing: border-box; }
body { margin: 0; background: #000; color: #222; font: 11px/17px "Open Sans", "Noto Sans", sans-serif; }
button { margin: 0; padding: 0; border: 0; background: none; color: inherit; font: inherit; }
h1, h2, h3, p, ul { margin: 0; padding: 0; font-size: 11px; font-weight: 400; }
ul { list-style: none; }
svg { display: block; flex: none; }
.sprite { position: absolute; width: 0; height: 0; }
.i16 { width: 16px; height: 16px; }
.i14 { width: 14px; height: 14px; }
.i9 { width: 9px; height: 9px; }

.app { display: flex; flex-direction: column; height: 100vh; border: solid #000; border-width: 18px 0 17px; background: #f1f1f1; }

/* Title bar */
.titlebar { display: flex; align-items: center; height: 20px; flex: none; gap: 2px; border-bottom: 1px solid #3d5f87; background: linear-gradient(#0003, #fff0 30%, #fff2), linear-gradient(90deg, #c3d5ea 0, #abc4e2 120px, #7ba3d3 340px, #4278b8 370px, #4479b6 800px, #4a76a9 1000px, #42709f); }
.titlebar h1 { color: #111; text-shadow: 0 0 4px #fff; }
.ghosts { display: flex; flex: 1; gap: 12px; padding-left: 10px; }
.ghosts i { width: 44px; height: 8px; background: #567fb3; opacity: .5; filter: blur(3px); }
.winctl { display: flex; align-self: flex-start; height: 15px; border-radius: 0 0 0 4px; overflow: hidden; border: 1px solid #dbe4ee; border-top: 0; }
.winctl button { display: grid; place-items: center; width: 26px; border-right: 1px solid #d5dde8; background: linear-gradient(#9fb0c4, #5f7b9c 50%, #7d95b1); }
.winctl svg { width: 12px; height: 12px; }
.winctl .shut { width: 43px; border: 0; background: linear-gradient(#dc9783, #c8452c 50%, #d4674b); }

/* Menu and toolbars */
.menubar { display: flex; align-items: center; height: 23px; flex: none; gap: 14px; padding-left: 9px; }
.toolbar { display: flex; align-items: center; height: 25px; flex: none; }
.toolbar:last-of-type { height: 24px; }
.grip { width: 7px; height: 14px; background: radial-gradient(circle at 4px 2px, #bbb 1px, #fff0 1px) 0 0 / 7px 4px; }
.tb { display: grid; place-items: center; width: 21px; height: 20px; flex: none; }
.tb svg { width: 16px; height: 16px; }
.tb.on { border: 1px solid #6ea6d9; background: #d7e9fa; }
.toolbar .on svg { width: 18px; height: 18px; }
.sep { width: 1px; height: 16px; margin: 0 2px; flex: none; background: #c9c9c9; }
.gap { width: 5px; flex: none; }
.dd { display: grid; place-items: center; width: 10px; height: 20px; flex: none; }
.dd svg { width: 6px; height: 6px; }
.dd.off { color: #aaa; }
.scale { position: relative; display: flex; width: 139px; height: 20px; }
.scale select { width: 100%; padding: 0 2px; appearance: none; border: 1px solid #e2e2e2; border-radius: 0; background: #fff; color: #222; font: inherit; font-size: 10px; line-height: 16px; }
.scale svg { position: absolute; right: 3px; top: 6px; width: 8px; height: 8px; pointer-events: none; }
.more { display: flex; flex-direction: column; align-items: center; justify-content: flex-end; gap: 1px; width: 10px; height: 20px; margin-left: 2px; padding-bottom: 1px; align-self: flex-end; background: linear-gradient(#eee, #bbb); }
.more i { width: 6px; height: 1px; background: #222; }
.more svg { width: 6px; height: 6px; }

/* Docked windows */
.work { display: flex; flex: 1; min-height: 0; padding-top: 1px; background: #ececee; }
.panel { display: flex; flex-direction: column; flex: none; }
.head { display: flex; align-items: center; gap: 5px; height: 18px; flex: none; padding: 0 2px 0 4px; background: linear-gradient(90deg, #c7d3e4, #dbe6f4); }
.toc .head { padding-left: 1px; }
.head h2 { flex: 1; color: #4d5969; }
.head button { width: 10px; height: 10px; color: #3c4654; }
.head svg { width: 10px; height: 10px; }
.strip { display: flex; align-items: center; height: 25px; flex: none; border-bottom: 1px solid #8b8e94; background: linear-gradient(#fafafa, #efeff0); }
.toc { width: 297px; margin-right: 4px; border-right: 1px solid #9b9fa6; border-left: 1px solid #777; }
.tree li { display: flex; align-items: center; height: 17px; white-space: nowrap; }
.layers { flex: 1; padding: 1px 0 0 5px; background: #fff; }
.layers li { gap: 6px; }
.layers .lvl1 { padding-left: 18px; gap: 7px; }
.layers .lvl2 { padding-left: 48px; }
.layers label { padding: 0 2px; background: #3491ef; color: #fff; }
.layers input { display: grid; place-items: center; width: 10px; height: 10px; margin: 0; appearance: none; border: 1px solid #222; background: #fff; }
.layers input:checked::before { content: ""; width: 6px; height: 3px; margin-top: -2px; border: solid #111; border-width: 0 0 2px 2px; transform: rotate(-45deg); }
.swatch { width: 14px; height: 11px; border: 1px solid #7f9b8b; background: #cfe9d9; }

.arc { width: 176px; margin-right: 3px; }
.arcbody { display: flex; flex-direction: column; flex: 1; min-height: 0; border: 1px solid #8c9097; background: #fff; }
.tools { flex: 1; overflow: hidden; }
.tools li { gap: 4px; padding-left: 7px; }
.tools .i16 { width: 16px; height: 15px; }
.tools .root { padding-left: 3px; }

/* Scroll bars */
.hscroll { display: flex; align-items: center; height: 17px; flex: none; background: #f3f3f3; }
.hscroll button { display: grid; place-items: center; width: 17px; height: 15px; color: #333; }
.hscroll button svg { width: 6px; height: 6px; }
.track { flex: 1; height: 15px; }
.thumb { display: grid; place-items: center; height: 100%; border: 1px solid #aaa; border-radius: 2px; background: linear-gradient(#f3f3f3, #dcdcdc 50%, #c7c7c7); }
.thumb.short { width: 82%; }
.thumb i { width: 7px; height: 6px; background: repeating-linear-gradient(90deg, #777 0 1px, #eee 1px 3px); }

/* Map */
.map { display: grid; grid-template: minmax(0, 1fr) 19px / minmax(0, 1fr) 15px; flex: 1; min-width: 0; margin-right: 7px; border-top: 1px solid #666; border-left: 2px solid #777; }
.canvas { position: relative; overflow: hidden; background: #fff; }
.drawing { position: absolute; inset: 0; width: 100%; height: 100%; }
.halo { fill: #fff200; mix-blend-mode: multiply; }
.vscroll { display: flex; flex-direction: column; align-items: center; background: #f3f3f3; }
.vscroll button { display: grid; place-items: center; width: 15px; height: 16px; color: #333; }
.vscroll button svg { width: 7px; height: 7px; }
.vthumb { display: grid; place-items: center; flex: 1; width: 13px; border: 1px solid #aaa; border-radius: 2px; background: linear-gradient(90deg, #f3f3f3, #dcdcdc 50%, #bfbfbf); }
.vthumb i { width: 6px; height: 7px; background: repeating-linear-gradient(#777 0 1px, #eee 1px 3px); }
.mapfoot { grid-column: 1 / -1; height: 19px; }
.mapfoot .view { width: 16px; }
.mapfoot .view svg { width: 10px; height: 10px; }
.mapfoot .on { border: 1px solid #555; background: #dedbc9; }
.corner { width: 15px; }

/* Floating toolbars */
.float { position: absolute; border: 2px solid #8c8c8c; background: #f3f3f3; }
.verts { left: 163px; top: 30px; width: 167px; }
.editor { left: 84px; top: 97px; width: 378px; }
.fhead { display: flex; align-items: center; gap: 5px; height: 15px; padding: 0 4px 0 2px; background: #9d9d9d; color: #fff; }
.fhead span { flex: 1; }
.fhead svg { width: 8px; height: 8px; }
.frow { display: flex; align-items: center; height: 22px; background: linear-gradient(#fafafa, #ececec); }
.edmenu { display: flex; align-items: center; justify-content: center; gap: 2px; width: 46px; }
.edmenu svg { width: 6px; height: 6px; }

/* Create Features */
.create { width: 254px; }
.create .strip { padding: 0 1px 0 5px; }
.create .strip input { flex: 1; min-width: 0; height: 20px; padding: 0 2px; border: 0; background: #fafafa; font: inherit; }
.create .strip input::placeholder { color: #555; opacity: 1; }
.templates { height: 158px; flex: none; padding: 2px 10px 0 6px; border: 1px solid #8b8e94; border-top: 0; background: #fff; }
.templates h3 { display: flex; align-items: center; gap: 5px; height: 18px; padding-left: 6px; color: #2a4eb0; }
.templates h3::after { content: ""; flex: 1; height: 1px; background: #ddd; }
.tpl { display: flex; align-items: center; gap: 1px; height: 17px; }
.tpl .swatch { width: 14px; height: 14px; background: #c6ecd0; }
.tpl .name { padding: 0 1px; background: #f0f0f0; font-size: 10px; line-height: 14px; }
.splitter { display: flex; align-items: center; height: 14px; flex: none; gap: 1px; border-bottom: 1px solid #999; padding: 0 1px 0 22px; }
.splitter hr { width: 84px; height: 1px; margin: 0 auto; border: 0; background: #aaa; }
.splitter button { width: 10px; height: 10px; border: 1px solid #333; background: #fff; }
.splitter svg { width: 8px; height: 8px; }
.conhead { display: flex; align-items: center; height: 24px; flex: none; background: #eee; }
.conhead h3 { font-weight: 700; }
.create p { height: 33px; flex: none; line-height: 33px; text-align: center; border-left: 1px solid #999; border-bottom: 1px solid #eee; background: #fff; }
.blank { flex: 1; border-left: 1px solid #999; background: #fff; }

.dock { width: 17px; padding-left: 3px; border-right: 1px solid #777; background: #f8f8f8; }
.cattab { display: flex; flex-direction: column; align-items: center; gap: 2px; width: 13px; height: 69px; padding-top: 5px; border: 1px solid #8b8e94; border-right: 0; border-radius: 3px 0 0 3px; background: #f3f3f3; overflow: hidden; }
.cattab svg { width: 14px; height: 14px; }
.cattab span { writing-mode: vertical-rl; line-height: 13px; font-size: 12px; color: #666; }

.status { display: flex; align-items: center; justify-content: flex-end; height: 20px; flex: none; padding-right: 69px; border-bottom: 1px solid #888; background: #efefef; font-size: 10px; }
```
